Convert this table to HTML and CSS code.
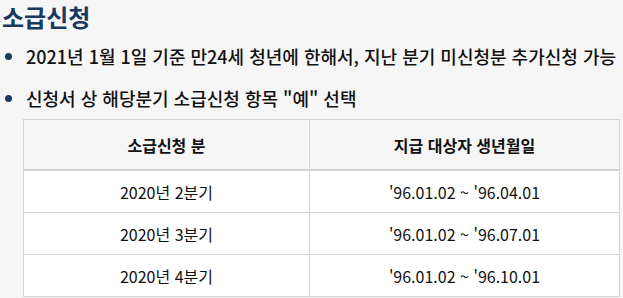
FILE: index.html
```html
<!DOCTYPE html>
<html lang="ko">
<head>
<meta charset="utf-8">
<link rel="stylesheet" href="styles.css">
</head>
<body>
<section class="panel">
  <h2 class="title">소급신청</h2>
  <ul class="notes">
    <li class="note"><span class="dot"></span><span>2021년 1월 1일 기준 만24세 청년에 한해서, 지난 분기 미신청분 추가신청 가능</span></li>
    <li class="note"><span class="dot"></span><span>신청서 상 해당분기 소급신청 항목 "예" 선택</span></li>
  </ul>
  <table class="grid">
    <thead>
      <tr><th class="c1">소급신청 분</th><th class="c2">지급 대상자 생년월일</th></tr>
    </thead>
    <tbody>
      <tr><td>2020년 2분기</td><td>'96.01.02 ~ '96.04.01</td></tr>
      <tr><td>2020년 3분기</td><td>'96.01.02 ~ '96.07.01</td></tr>
      <tr><td>2020년 4분기</td><td>'96.01.02 ~ '96.10.01</td></tr>
    </tbody>
  </table>
</section>
</body>
</html>
```
FILE: styles.css
```css
html, body {
  margin: 0;
  padding: 0;
  background: #f6f6f6;
}
body {
  font-family: "Noto Sans CJK KR", "Noto Sans", sans-serif;
  color: #111;
}
.title {
  margin: 0;
  padding-left: 2px;
  font-size: 24px;
  font-weight: 700;
  line-height: 34px;
  color: #173a5e;
}
.notes {
  list-style: none;
  margin: 0;
  padding: 1px 0 0 0;
}
.note {
  display: flex;
  align-items: center;
  height: 42px;
  font-size: 18px;
  font-weight: 500;
  color: #111;
}
.dot {
  width: 7px;
  height: 7px;
  border-radius: 50%;
  background: #173a5e;
  margin: 0 14px 0 5px;
  flex: none;
}
.grid {
  margin: 0 0 0 23px;
  width: 597px;
  border-collapse: collapse;
  font-size: 16px;
}
.grid th, .grid td {
  border: 1px solid #d3d3d5;
  text-align: center;
  padding: 0;
}
.grid th {
  height: 49px;
  font-weight: 700;
  background: #f6f6f6;
  border-bottom: 2px solid #d3d3d8;
}
.grid td {
  height: 41px;
  background: #fff;
  font-weight: 400;
}
.c1 { width: 285px; }
.c2 { width: 309px; }
```
